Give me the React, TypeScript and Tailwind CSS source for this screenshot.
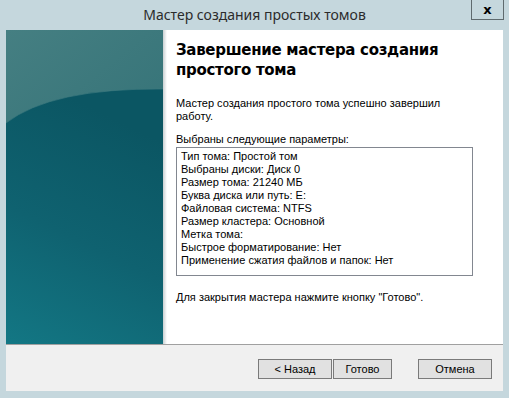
import type { ReactNode } from 'react';

// Windows "New Simple Volume" wizard, last page.
const summary = [
  'Тип тома: Простой том',
  'Выбраны диски: Диск 0',
  'Размер тома: 21240 МБ',
  'Буква диска или путь: E:',
  'Файловая система: NTFS',
  'Размер кластера: Основной',
  'Метка тома:',
  'Быстрое форматирование: Нет',
  'Применение сжатия файлов и папок: Нет',
];

function SidePanel(): JSX.Element {
  return (
    <div className="w-[157px] h-full shrink-0">
      <svg width="157" height="314" viewBox="0 0 157 314" preserveAspectRatio="none" className="block">
        <defs>
          <linearGradient id="topg" x1="0" y1="0" x2="0.4" y2="1">
            <stop offset="0" stopColor="#457f82" />
            <stop offset="1" stopColor="#2c6c72" />
          </linearGradient>
          <linearGradient id="lowg" x1="0.3" y1="0" x2="0" y2="1">
            <stop offset="0" stopColor="#0b5663" />
            <stop offset="0.5" stopColor="#0f6270" />
            <stop offset="1" stopColor="#137784" />
          </linearGradient>
        </defs>
        <rect x="0" y="0" width="157" height="314" fill="url(#topg)" />
        <path d="M0,93 Q45,58 157,59 L157,314 L0,314 Z" fill="url(#lowg)" />
        <path d="M0,93 Q45,58 157,59" fill="none" stroke="#3f7c80" strokeWidth="1" opacity="0.6" />
      </svg>
    </div>
  );
}

function Button({ children, w }: { children: ReactNode; w: string }): JSX.Element {
  return (
    <div
      className={`${w} h-[20px] flex items-center justify-center bg-[#e1e1e1] border border-[#7a7a7a] text-[11px] text-black`}
    >
      {children}
    </div>
  );
}

export default function App(): JSX.Element {
  return (
    <div
      className="w-[509px] h-[398px] bg-[#c5d7dd] flex flex-col overflow-hidden"
      style={{ fontFamily: '"Liberation Sans", Arial, sans-serif' }}
    >
      {/* title bar */}
      <div className="h-[30px] relative flex items-center justify-center shrink-0">
        <span className="text-[14px] text-[#2b2b2b] pb-[1px]" style={{ fontFamily: '"Noto Sans", "Open Sans", sans-serif' }}>
          Мастер создания простых томов
        </span>
        <div className="absolute top-[-1px] right-[5px] w-[33px] h-[21px] border border-[#5f6a6e] flex items-center justify-center">
          <span className="text-[13px] font-bold text-black leading-none" style={{ fontFamily: '"DejaVu Sans", sans-serif' }}>
            x
          </span>
        </div>
      </div>

      <div className="mx-[6px] flex flex-col">
        {/* page */}
        <div className="h-[314px] bg-white flex">
          <SidePanel />
          <div className="w-[5px] h-full bg-gradient-to-r from-[#c9d0d2] to-white" />
          <div className="flex-1 pl-[9px] pr-[30px] text-[11px] text-black">
            <h1
              className="mt-[10px] text-[15px] font-bold leading-[20px] text-black tracking-[-0.3px]"
              style={{ fontFamily: '"DejaVu Sans", Verdana, sans-serif' }}
            >
              Завершение мастера создания
              <br />
              простого тома
            </h1>
            <p className="mt-[17px] leading-[13px] w-[280px]">
              Мастер создания простого тома успешно завершил работу.
            </p>
            <p className="mt-[10px] leading-[13px]">Выбраны следующие параметры:</p>
            <div className="mt-[1px] w-[297px] h-[129px] border border-[#828790] pl-[4px] pt-[2px] leading-[13px]">
              {summary.map((s) => (
                <div key={s}>{s}</div>
              ))}
            </div>
            <p className="mt-[15px] leading-[13px]">Для закрытия мастера нажмите кнопку "Готово".</p>
          </div>
        </div>
        <div className="h-px bg-[#a0a0a0]" />
        {/* button bar */}
        <div className="h-[46px] bg-[#f0f0f0] flex items-start justify-end pt-[14px] pr-[11px]">
          <Button w="w-[74px]">&lt; Назад</Button>
          <div className="w-[1px]" />
          <Button w="w-[59px]">Готово</Button>
          <div className="w-[26px]" />
          <Button w="w-[74px]">Отмена</Button>
        </div>
      </div>
    </div>
  );
}
